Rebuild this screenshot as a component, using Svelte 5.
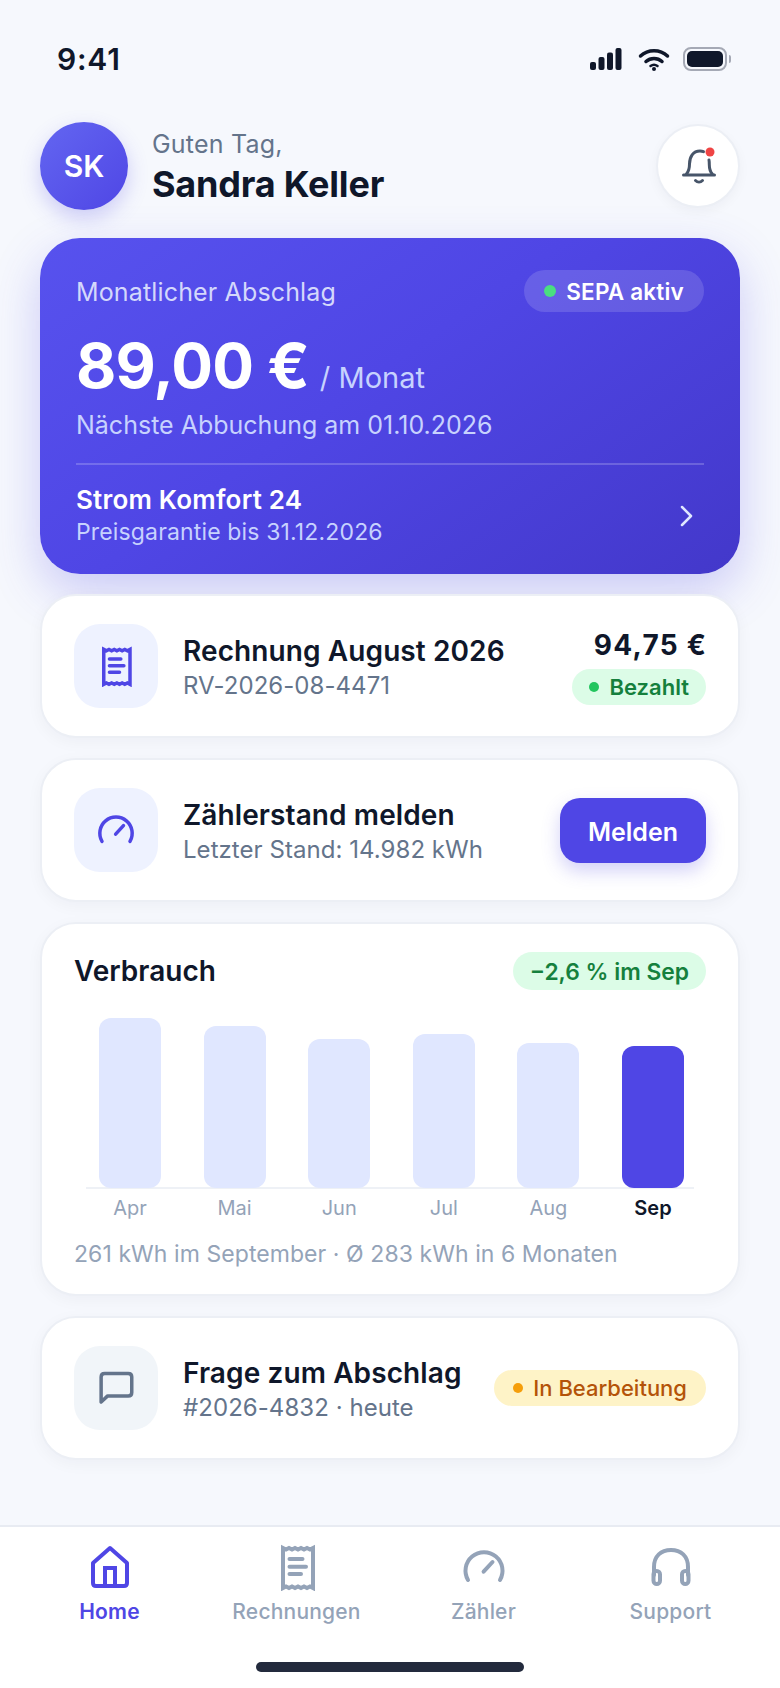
<script>
  const bars = [
    { m: 'Apr', h: 170 }, { m: 'Mai', h: 162 }, { m: 'Jun', h: 149 },
    { m: 'Jul', h: 154 }, { m: 'Aug', h: 145 }, { m: 'Sep', h: 142, on: true }
  ];
</script>

{#snippet receipt()}
  <path d="M10 5l3 1.6 3-1.6 3 1.6 3-1.6 3 1.6 3-1.6 3 1.6 3-1.6 3 1.6 3-1.6V45l-3-1.6-3 1.6-3-1.6-3 1.6-3-1.6-3 1.6-3-1.6-3 1.6-3-1.6-3 1.6z" />
  <path d="M16.500 16H29.500M16.500 23.700H33M16.500 31H28" />
{/snippet}

{#snippet gauge()}
  <path d="M8 37A18.500 18.500 0 1 1 40 37" />
  <path d="M23.600 28.700L32.500 19" />
{/snippet}

<div class="page">
  <div class="status">
    <span class="time">9:41</span>
    <div class="status-icons">
      <svg width="34" height="24" viewBox="0 0 34 24" class="dark-fill">
        <rect x="1" y="15" width="6" height="8" rx="2" />
        <rect x="9.500" y="10" width="6" height="13" rx="2" />
        <rect x="18" y="5.500" width="6" height="17.500" rx="2" />
        <rect x="26.500" y="1" width="6" height="22" rx="2" />
      </svg>
      <svg width="32" height="24" viewBox="0 0 32 24" class="wifi">
        <path d="M2.500 9C10 2 22 2 29.500 9" />
        <path d="M8 14.500c4.500-4 11.500-4 16 0" />
        <path d="M12.500 19c2-1.500 5-1.500 7 0" stroke-width="2.500" />
        <circle cx="16" cy="22" r="2" />
      </svg>
      <div class="battery"><div class="battery-fill"></div></div>
      <div class="nub"></div>
    </div>
  </div>

  <main>
    <header>
      <div class="avatar">SK</div>
      <div class="hello">
        <div class="greet">Guten Tag,</div>
        <div class="name">Sandra Keller</div>
      </div>
      <button class="bell" aria-label="Benachrichtigungen">
        <svg width="36" height="40" viewBox="0 0 36 40" class="bell-icon">
          <path d="M2.500 29h31" />
          <path d="M5.500 28c2.500-3 3-6 3-10 0-7 3.500-13 10.500-13 1.500 0 2.500.2 3.500.6" />
          <path d="M28 14c.3 1.500.3 3 .3 4.500 0 4 .7 7 3 9.500" />
          <path d="M14.500 34.500c2 2 5 2 7 0" />
          <circle class="red" cx="29" cy="6" r="4.500" />
        </svg>
      </button>
    </header>

    <section class="hero">
      <div class="hero-top">
        <span class="hero-label">Monatlicher Abschlag</span>
        <span class="sepa"><i class="dot sepa-dot"></i>SEPA aktiv</span>
      </div>
      <div class="amount"><b>89,00 €</b><span>/ Monat</span></div>
      <div class="next">Nächste Abbuchung am 01.10.2026</div>
      <div class="tariff">
        <div>
          <div class="tariff-name">Strom Komfort 24</div>
          <div class="tariff-sub">Preisgarantie bis 31.12.2026</div>
        </div>
        <svg width="16" height="24" viewBox="0 0 16 24" class="chev"><path d="M3 3l9 9-9 9" /></svg>
      </div>
    </section>

    <section class="card row">
      <div class="tile"><svg width="42" height="42" viewBox="0 0 48 48" class="ico indigo">{@render receipt()}</svg></div>
      <div class="grow">
        <div class="title">Rechnung August 2026</div>
        <div class="sub">RV-2026-08-4471</div>
      </div>
      <div class="right">
        <div class="price">94,75 €</div>
        <span class="pill green"><i class="dot green-dot"></i>Bezahlt</span>
      </div>
    </section>

    <section class="card row">
      <div class="tile"><svg width="42" height="42" viewBox="0 0 48 48" class="ico indigo">{@render gauge()}</svg></div>
      <div class="grow">
        <div class="title">Zählerstand melden</div>
        <div class="sub">Letzter Stand: 14.982 kWh</div>
      </div>
      <button class="melden">Melden</button>
    </section>

    <section class="card usage">
      <div class="usage-head">
        <span class="usage-title">Verbrauch</span>
        <span class="pill green big">−2,6 % im Sep</span>
      </div>
      <div class="chart">
        {#each bars as b}
          <div class="bar" class:on={b.on} style="height:{b.h}px"></div>
        {/each}
      </div>
      <div class="months">
        {#each bars as b}
          <span class="month" class:on={b.on}>{b.m}</span>
        {/each}
      </div>
      <div class="foot">261 kWh im September · Ø 283 kWh in 6 Monaten</div>
    </section>

    <section class="card row">
      <div class="tile gray">
        <svg width="42" height="42" viewBox="0 0 48 48" class="ico slate">
          <path d="M7 40V11.500C7 9 8.500 7.500 11 7.500h27c2.500 0 4 1.500 4 4V29c0 2.500-1.500 4-4 4H14.500z" stroke-linejoin="round" />
        </svg>
      </div>
      <div class="grow">
        <div class="title">Frage zum Abschlag</div>
        <div class="sub">#2026-4832 · heute</div>
      </div>
      <span class="pill amber"><i class="dot amber-dot"></i>In Bearbeitung</span>
    </section>
  </main>

  <nav class="tabs">
    <div class="tab active">
      <svg width="48" height="48" viewBox="0 0 48 48" class="ico">
        <path d="M24 5L41 20V40c0 2-1 3-3 3H10c-2 0-3-1-3-3V20z" stroke-linejoin="round" />
        <path d="M19 43V25H29V43" />
      </svg>
      <span>Home</span>
    </div>
    <div class="tab">
      <svg width="48" height="48" viewBox="0 0 48 48" class="ico">{@render receipt()}</svg>
      <span>Rechnungen</span>
    </div>
    <div class="tab">
      <svg width="48" height="48" viewBox="0 0 48 48" class="ico">{@render gauge()}</svg>
      <span>Zähler</span>
    </div>
    <div class="tab">
      <svg width="48" height="48" viewBox="0 0 48 48" class="ico">
        <path d="M7 32V24C7 13 14 7 24 7s17 6 17 17v8" />
        <rect x="6.500" y="28" width="6.500" height="13" rx="3.250" />
        <rect x="35" y="28" width="6.500" height="13" rx="3.250" />
      </svg>
      <span>Support</span>
    </div>
    <div class="home-indicator"></div>
  </nav>
</div>

<style>
  :global(body) { margin: 0; background: #f6f8fd; }
  .page {
    width: 780px; min-height: 1688px; display: flex; flex-direction: column;
    font-family: Inter, "Liberation Sans", sans-serif; color: #0f172a;
    background: #f6f8fd; box-sizing: border-box;
  }
  .status {
    height: 118px; display: flex; align-items: center; justify-content: space-between;
    padding: 0 49px 0 57px; box-sizing: border-box;
  }
  .time { font-size: 30px; font-weight: 600; letter-spacing: 0.8px; }
  .status-icons { display: flex; align-items: center; }
  .dark-fill { fill: #0f172a; margin-right: 15px; }
  .wifi { fill: none; stroke: #0f172a; stroke-width: 3.500; stroke-linecap: round; margin-right: 13px; }
  .wifi circle { fill: #0f172a; stroke: none; }
  .battery {
    width: 44px; height: 24px; border: 2px solid #a5a9b5; border-radius: 8px;
    box-sizing: border-box; padding: 2px;
  }
  .battery-fill { width: 100%; height: 100%; background: #0f172a; border-radius: 5px; }
  .nub { width: 2px; height: 8px; background: #a5a9b5; border-radius: 0 2px 2px 0; margin-left: 2px; }

  main { padding: 4px 40px 0; display: flex; flex-direction: column; }
  header { display: flex; align-items: center; height: 88px; margin-bottom: 28px; }
  .avatar {
    width: 88px; height: 88px; border-radius: 50%; flex: none;
    background: linear-gradient(135deg, #6366f1, #4f46e5);
    color: #fff; font-size: 30px; font-weight: 600;
    display: flex; align-items: center; justify-content: center;
    box-shadow: 0 8px 20px rgba(79, 70, 229, 0.25);
  }
  .hello { margin-left: 24px; flex: 1; }
  .greet { font-size: 25px; letter-spacing: 0.2px; color: #64748b; line-height: 32px; margin-top: 1px; }
  .name { font-size: 36px; font-weight: 700; letter-spacing: -0.2px; line-height: 44px; margin-top: 2px; }
  .bell {
    width: 84px; height: 84px; border-radius: 50%; background: #fff;
    border: 2px solid #eceff5; padding: 0 0 0 2px;
    display: flex; align-items: center; justify-content: center;
    box-shadow: 0 4px 12px rgba(15, 23, 42, 0.04);
  }
  .bell-icon { fill: none; stroke: #475569; stroke-width: 3; stroke-linecap: round; }
  .red { fill: #ef4444; stroke: none; }

  .hero {
    height: 336px; border-radius: 40px; box-sizing: border-box; padding: 32px 36px 0;
    background: linear-gradient(145deg, #5752ee 0%, #4f46e5 45%, #4338ca 100%);
    color: #fff; box-shadow: 0 18px 48px rgba(79, 70, 229, 0.26);
    display: flex; flex-direction: column;
  }
  .hero-top { display: flex; justify-content: space-between; align-items: center; height: 42px; }
  .hero-label { font-size: 25px; letter-spacing: 0.15px; color: #d4d8fb; margin-top: 2px; }
  .sepa {
    height: 42px; padding: 0 20px; border-radius: 21px; background: rgba(255, 255, 255, 0.14);
    display: flex; align-items: center; gap: 10px; font-size: 22.500px; font-weight: 600; letter-spacing: 0.2px;
  }
  .dot { display: block; border-radius: 50%; width: 10px; height: 10px; flex: none; font-style: normal; }
  .sepa-dot { width: 12px; height: 12px; background: #4ade80; }
  .amount { display: flex; align-items: baseline; gap: 11px; margin-top: 16px; line-height: 76px; }
  .amount b { font-size: 62px; font-weight: 700; letter-spacing: -0.8px; }
  .amount span { font-size: 29px; color: #c7d2fe; }
  .next { font-size: 25px; color: #c7d2fe; margin-top: -7px; line-height: 32px; }
  .tariff {
    margin-top: 22px; padding-top: 18px; border-top: 2px solid rgba(255, 255, 255, 0.2);
    display: flex; justify-content: space-between; align-items: center;
  }
  .tariff-name { font-size: 26px; font-weight: 600; line-height: 34px; letter-spacing: 0.2px; }
  .tariff-sub { font-size: 23px; color: #c7d2fe; line-height: 30px; letter-spacing: 0.15px; }
  .chev { fill: none; stroke: #e0e7ff; stroke-width: 2.500; stroke-linecap: round; stroke-linejoin: round; margin-right: 9px; margin-top: 2px; }

  .card {
    margin-top: 20px; background: #fff; border: 2px solid #eceff5; border-radius: 36px;
    box-shadow: 0 4px 16px rgba(15, 23, 42, 0.04); box-sizing: border-box;
  }
  .row { height: 144px; padding: 0 32px; display: flex; align-items: center; gap: 25px; }
  .tile {
    width: 84px; height: 84px; border-radius: 26px; background: #eef2ff; flex: none;
    display: flex; align-items: center; justify-content: center;
  }
  .tile.gray { background: #f1f5f9; }
  .ico { fill: none; stroke-width: 4; stroke-linecap: round; display: block; }
  .indigo { stroke: #4f46e5; }
  .slate { stroke: #64748b; }
  .grow { flex: 1; min-width: 0; padding-top: 3px; }
  .title { font-size: 28px; font-weight: 600; line-height: 36px; letter-spacing: 0.1px; }
  .sub { font-size: 24px; color: #64748b; line-height: 32px; letter-spacing: 0.05px; margin-top: 1px; }
  .right { display: flex; flex-direction: column; align-items: flex-end; gap: 7px; padding-top: 1px; }
  .price { font-size: 28px; font-weight: 700; line-height: 34px; letter-spacing: 1.3px; margin-right: -1.300px; }
  .pill {
    height: 36px; border-radius: 18px; padding: 0 17px; display: inline-flex; align-items: center; gap: 10px;
    font-size: 22px; font-weight: 600; white-space: nowrap; box-sizing: border-box;
  }
  .green { background: #dcfce7; color: #15803d; }
  .green-dot { background: #22c55e; }
  .amber { background: #fef3c7; color: #b45309; font-weight: 500; padding: 0 19px 0 19px; }
  .amber-dot { background: #f59e0b; }
  .big { height: 38px; border-radius: 19px; font-size: 22.800px; }
  .melden {
    width: 146px; height: 65px; border: 0; border-radius: 20px; background: #4f46e5; color: #fff;
    font: 600 25px Inter, sans-serif; box-shadow: 0 8px 18px rgba(79, 70, 229, 0.25); padding: 3px 0 0;
  }

  .usage { height: 374px; padding: 28px 32px 0; }
  .usage-head { display: flex; justify-content: space-between; align-items: center; height: 38px; }
  .usage-title { font-size: 28px; font-weight: 600; }
  .chart {
    margin: 4px 12px 0; padding: 0 10px 0 13px; height: 193px; display: flex; align-items: flex-end;
    justify-content: space-between; border-bottom: 2px solid #eef1f6;
  }
  .bar { width: 62px; background: #e0e7ff; border-radius: 12px; margin-bottom: -1px; }
  .bar.on { background: #4f46e5; }
  .months { margin: 0 12px; padding: 4px 10px 0 13px; display: flex; justify-content: space-between; }
  .month { width: 62px; text-align: center; font-size: 20px; color: #94a3b8; line-height: 30px; }
  .month.on { color: #0f172a; font-weight: 600; }
  .foot { font-size: 23px; letter-spacing: 0.07px; color: #94a3b8; margin-top: 15px; line-height: 32px; }

  .tabs {
    margin-top: auto; height: 163px; box-sizing: border-box; background: #fff; border-top: 2px solid #e8ebf2;
    padding: 16px 16px 0; display: grid; grid-template-columns: repeat(4, 1fr); position: relative;
    align-items: start;
  }
  .tab { display: flex; flex-direction: column; align-items: center; color: #94a3b8; stroke: #94a3b8; }
  .tab span { font-size: 21px; font-weight: 500; line-height: 28px; margin-top: 7px; letter-spacing: 0.2px; }
  .tab.active { color: #4f46e5; stroke: #4f46e5; }
  .tab.active span { font-weight: 600; }
  .tab svg { stroke: inherit; }
  .home-indicator {
    position: absolute; left: 256px; bottom: 16px; width: 268px; height: 10px;
    border-radius: 5px; background: #232a3d;
  }
</style>
